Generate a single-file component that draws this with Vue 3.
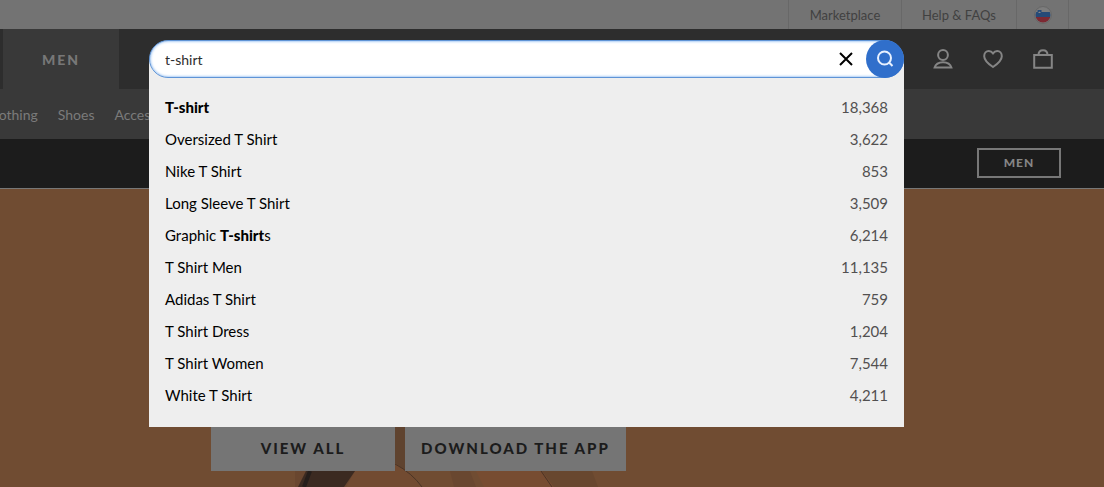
<script setup>
import { ref } from 'vue'

const query = ref('t-shirt')
const suggestions = [
  { parts: [['T-shirt', true]], count: '18,368' },
  { parts: [['Oversized T Shirt', false]], count: '3,622' },
  { parts: [['Nike T Shirt', false]], count: '853' },
  { parts: [['Long Sleeve T Shirt', false]], count: '3,509' },
  { parts: [['Graphic ', false], ['T-shirt', true], ['s', false]], count: '6,214' },
  { parts: [['T Shirt Men', false]], count: '11,135' },
  { parts: [['Adidas T Shirt', false]], count: '759' },
  { parts: [['T Shirt Dress', false]], count: '1,204' },
  { parts: [['T Shirt Women', false]], count: '7,544' },
  { parts: [['White T Shirt', false]], count: '4,211' },
]
</script>

<template>
  <div class="page">
    <div class="topbar">
      <a href="#" class="toplink">Marketplace</a>
      <a href="#" class="toplink">Help &amp; FAQs</a>
      <button class="country" aria-label="Country: Slovenia">
        <svg width="18" height="18" viewBox="0 0 18 18">
          <defs><clipPath id="flag"><circle cx="9" cy="9" r="7.500" /></clipPath></defs>
          <circle cx="9" cy="9" r="8.500" fill="#7a7a7a" stroke="#686868" />
          <g clip-path="url(#flag)">
            <rect width="18" height="6" fill="#7d7d7d" />
            <rect y="6" width="18" height="6" fill="#254a78" />
            <rect y="11" width="18" height="7" fill="#7c2933" />
            <path d="M3.500 4h4v3.500q-.5 1.500-2 2q-1.500-.5-2-2z" fill="#254a78" />
            <path d="M4 7l1.500-1.500L7 7z" fill="#8a8a8a" />
          </g>
        </svg>
      </button>
    </div>

    <header class="mainbar">
      <a href="#" class="tab">MEN</a>
      <form class="search" @submit.prevent>
        <div class="field">
          <input v-model="query" class="query" type="text" aria-label="Search" />
          <button type="button" class="clear" aria-label="Clear search" @click="query = ''">
            <svg width="14" height="14" viewBox="0 0 14 14"><path d="M1 1L13 13M13 1L1 13" stroke="#000" stroke-width="2" fill="none" /></svg>
          </button>
          <button class="go" aria-label="Search">
            <svg width="18" height="18" viewBox="0 0 18 18" fill="none" stroke="#e8f1ff" stroke-width="2"><circle cx="8.500" cy="8" r="6.500" /><path d="M12.800 12.300L16.500 16" /></svg>
          </button>
        </div>
        <ul class="panel">
          <li v-for="item in suggestions" :key="item.count">
            <a href="#" class="suggestion">
              <span class="label"><component :is="bold ? 'b' : 'span'" v-for="([text, bold], i) in item.parts" :key="i">{{ text }}</component></span>
              <span class="count">{{ item.count }}</span>
            </a>
          </li>
        </ul>
      </form>
      <div class="actions">
        <button class="action" aria-label="My account">
          <svg width="20" height="20" viewBox="0 0 20 20"><circle cx="10" cy="6" r="4.900" /><path d="M1.600 18.500C2.700 14.700 6 13.200 10 13.200S17.300 14.700 18.400 18.500Z" /></svg>
        </button>
        <button class="action" aria-label="Saved items">
          <svg width="20" height="20" viewBox="0 0 20 20"><path d="M10 18C6 15.300 1.200 11.800 1.200 7.200C1.200 4.200 3.200 2 5.800 2C7.600 2 9 2.900 10 4.300C11 2.900 12.400 2 14.200 2C16.800 2 18.800 4.200 18.800 7.200C18.800 11.800 14 15.300 10 18Z" /></svg>
        </button>
        <button class="action" aria-label="Bag">
          <svg width="20" height="20" viewBox="0 0 20 20"><path d="M1.200 6H18.800V18.800H1.200ZM5.500 6C5.500 3 7.300 1.200 10 1.200S14.500 3 14.500 6" /></svg>
        </button>
      </div>
    </header>

    <nav class="subnav">
      <a href="#">Clothing</a>
      <a href="#">Shoes</a>
      <a href="#">Accessories</a>
    </nav>

    <div class="promo"><a href="#" class="promo-link">MEN</a></div>

    <main class="hero">
      <svg class="art" width="340" height="60" viewBox="0 0 340 60" aria-hidden="true">
        <path d="M15 0H115V60H15Z" fill="#69462f" />
        <path d="M115 0H126V44H115Z" fill="#5f432f" />
        <path d="M75 44L115 36Q132 48 142 60H66Z" fill="#724b31" />
        <path d="M170 44H190L196 60H174Z" fill="#694730" />
        <path d="M196 44H262L274 60H204Z" fill="#774c31" />
        <path d="M262 44H312L318 60H274Z" fill="#68472f" />
        <path d="M26 44H75L64 60H18Z" fill="#3b2a21" />
        <path d="M30 44L24 60" stroke="#251e1b" stroke-width="4" />
        <path d="M115 37Q132 46 142 60M261 44L272 60" stroke="#4a3426" stroke-width="1" fill="none" />
      </svg>
      <a href="#" class="cta">VIEW ALL</a>
      <a href="#" class="cta app">DOWNLOAD THE APP</a>
    </main>
  </div>
</template>

<style>
body {
  margin: 0;
}
</style>

<style scoped>
* {
  box-sizing: border-box;
}
.page {
  display: flex;
  flex-direction: column;
  min-height: 100vh;
  overflow: hidden;
  background: #704c32;
  font-family: Lato, "Liberation Sans", sans-serif;
  font-size: 15px;
}
a {
  color: inherit;
  text-decoration: none;
}
button {
  display: flex;
  align-items: center;
  justify-content: center;
  padding: 0;
  border: 0;
  background: none;
  cursor: pointer;
}
.topbar {
  display: flex;
  justify-content: flex-end;
  height: 29px;
  padding-right: 35px;
  background: #737373;
  color: #414141;
  font-size: 13px;
}
.toplink,
.country {
  display: flex;
  align-items: center;
  justify-content: center;
  border-left: 1px solid #686868;
}
.toplink {
  width: 113px;
}
.toplink + .toplink {
  width: 115px;
}
.country {
  width: 53px;
  border-right: 1px solid #686868;
}
.mainbar {
  display: flex;
  align-items: center;
  height: 60px;
  padding-left: 3px;
  background: #2d2d2d;
}
.tab {
  display: flex;
  align-items: center;
  justify-content: center;
  align-self: stretch;
  width: 116px;
  background: #393939;
  color: #777;
  font-size: 14px;
  font-weight: 900;
  letter-spacing: 2px;
}
.search {
  position: relative;
  z-index: 2;
  flex: 1;
  margin-left: 30px;
}
.field {
  position: relative;
  z-index: 1;
  display: flex;
  align-items: center;
  height: 38px;
  border: 1px solid #5f94d6;
  border-radius: 19px;
  background: #fff;
  box-shadow: inset 0 0 3px #5b9dec;
}
.query {
  flex: 1;
  min-width: 0;
  height: 36px;
  padding: 0 15px;
  border: 0;
  outline: 0;
  background: none;
  color: #2d2d2d;
  font: inherit;
  font-size: 14px;
}
.clear {
  width: 40px;
  height: 36px;
}
.go {
  width: 38px;
  height: 38px;
  margin-right: -1px;
  border-radius: 50%;
  background: #306fcb;
}
.panel {
  position: absolute;
  top: 50%;
  left: 0;
  right: 0;
  margin: 0;
  padding: 32px 0 16px;
  background: #eee;
  list-style: none;
}
.suggestion {
  display: flex;
  justify-content: space-between;
  padding: 0 16px;
  color: #000;
  line-height: 32px;
}
.label {
  white-space: pre;
}
.label b {
  font-weight: 900;
}
.count {
  color: #525050;
}
.actions {
  display: flex;
  padding: 0 36px 0 14px;
}
.action {
  width: 50px;
  height: 50px;
}
.action svg {
  fill: none;
  stroke: #858585;
  stroke-width: 2;
}
.subnav {
  display: flex;
  align-items: center;
  gap: 20px;
  height: 50px;
  margin-left: -14px;
  background: #393939;
  color: #7b7b7b;
  font-size: 14px;
}
.promo {
  display: flex;
  align-items: center;
  justify-content: flex-end;
  height: 50px;
  padding: 0 43px 2px 0;
  border-bottom: 1px solid #777;
  background: #1c1c1c;
}
.promo-link {
  width: 84px;
  border: 2px solid #777;
  color: #858585;
  font-size: 12px;
  font-weight: 900;
  letter-spacing: 1px;
  line-height: 26px;
  text-align: center;
}
.hero {
  position: relative;
  display: flex;
  flex: 1;
  align-items: flex-end;
  gap: 10px;
  min-height: 298px;
  padding: 0 0 16px 211px;
}
.art {
  position: absolute;
  bottom: 0;
  left: 280px;
}
.cta {
  position: relative;
  width: 184px;
  background: #757575;
  color: #1c1c1c;
  font-weight: 900;
  letter-spacing: 2px;
  line-height: 46px;
  text-align: center;
}
.app {
  width: 221px;
}
</style>
